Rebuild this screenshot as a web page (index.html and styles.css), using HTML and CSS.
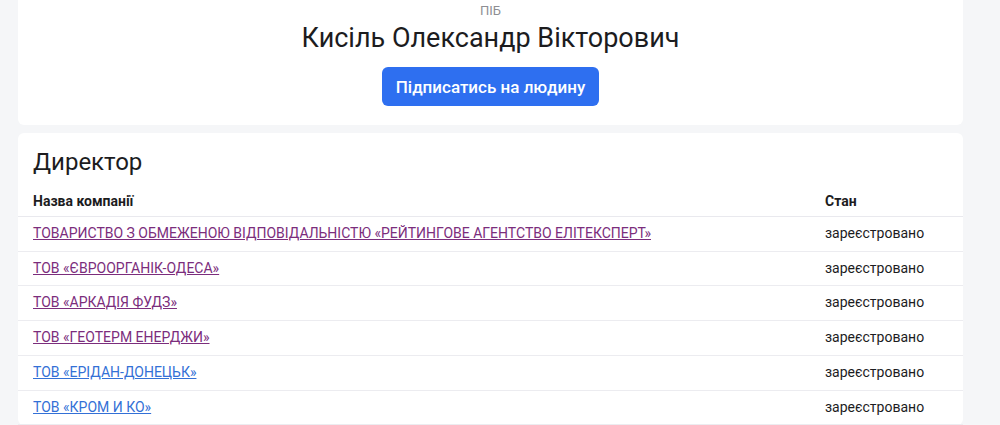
FILE: index.html
```html
<!DOCTYPE html>
<html lang="uk">
<head>
<meta charset="utf-8">
<link rel="stylesheet" href="styles.css">
</head>
<body>
<main class="page">
  <section class="card person">
    <div class="label">ПІБ</div>
    <h1 class="name">Кисіль Олександр Вікторович</h1>
    <button class="subscribe">Підписатись на людину</button>
  </section>
  <section class="card roles">
    <h2 class="role-title">Директор</h2>
    <table class="companies">
      <thead>
        <tr><th class="col-name">Назва компанії</th><th class="col-state">Стан</th></tr>
      </thead>
      <tbody>
        <tr><td><a class="visited" href="#">ТОВАРИСТВО З ОБМЕЖЕНОЮ ВІДПОВІДАЛЬНІСТЮ «РЕЙТИНГОВЕ АГЕНТСТВО ЕЛІТЕКСПЕРТ»</a></td><td>зареєстровано</td></tr>
        <tr><td><a class="visited" href="#">ТОВ «ЄВРООРГАНІК-ОДЕСА»</a></td><td>зареєстровано</td></tr>
        <tr><td><a class="visited" href="#">ТОВ «АРКАДІЯ ФУДЗ»</a></td><td>зареєстровано</td></tr>
        <tr><td><a class="visited" href="#">ТОВ «ГЕОТЕРМ ЕНЕРДЖИ»</a></td><td>зареєстровано</td></tr>
        <tr><td><a class="link" href="#">ТОВ «ЕРІДАН-ДОНЕЦЬК»</a></td><td>зареєстровано</td></tr>
        <tr><td><a class="link" href="#">ТОВ «КРОМ И КО»</a></td><td>зареєстровано</td></tr>
      </tbody>
    </table>
  </section>
</main>
</body>
</html>
```
FILE: styles.css
```css
html, body {
  margin: 0;
  padding: 0;
  background: #f5f6f8;
  font-family: Roboto, "Noto Sans", sans-serif;
  color: #1c1c1e;
}
.page {
  width: 945px;
  margin-left: 18px;
  display: flex;
  flex-direction: column;
  gap: 8px;
}
.card {
  background: #ffffff;
  border-radius: 6px;
}
.person {
  border-top-left-radius: 0;
  border-top-right-radius: 0;
  display: flex;
  flex-direction: column;
  align-items: center;
  padding: 3px 0 19px;
}
.label {
  font-size: 13px;
  line-height: 16px;
  color: #8e8e93;
}
.name {
  margin: 2px 0 12px;
  font-size: 27px;
  line-height: 34px;
  font-weight: 400;
  color: #1c1c1e;
}
.subscribe {
  font-family: inherit;
  font-size: 17px;
  font-weight: 500;
  color: #ffffff;
  background: #2e6ff0;
  border: none;
  border-radius: 6px;
  width: 217px;
  height: 39px;
  padding: 0;
}
.roles {
  padding-top: 14px;
}
.role-title {
  margin: 0 15px 7px;
  font-size: 24px;
  line-height: 30px;
  font-weight: 400;
}
.companies {
  width: 100%;
  border-collapse: collapse;
  font-size: 14px;
}
.companies th {
  text-align: left;
  font-weight: 700;
  padding: 8px 15px 6px;
  line-height: 18px;
  border-bottom: 1px solid #e9e9ee;
}
.companies td {
  padding: 8px 15px;
  line-height: 17.7px;
  border-bottom: 1px solid #ececf0;
}
.col-state {
  width: 123px;
}
.visited {
  color: #7b2d7c;
}
.link {
  color: #3370d6;
}
```
